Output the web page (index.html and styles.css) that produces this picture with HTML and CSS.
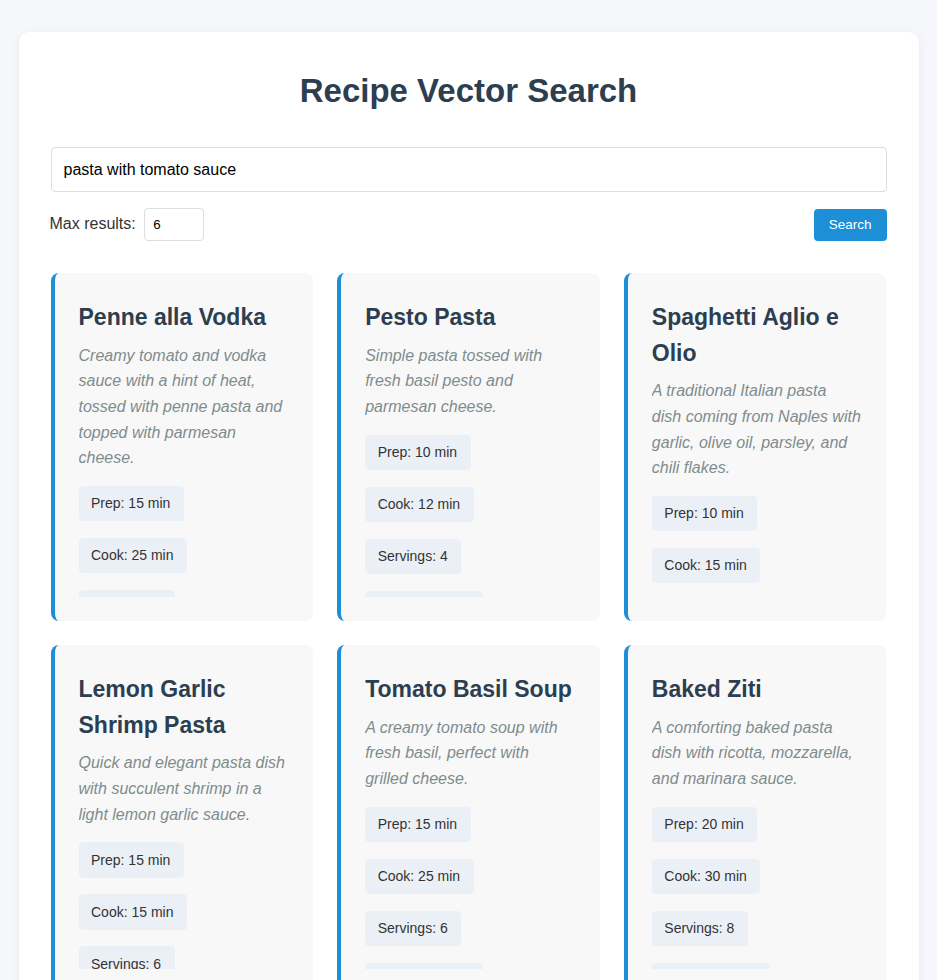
FILE: index.html
```html
<!DOCTYPE html>
<html lang="en">
<head>
<meta charset="utf-8">
<title>Recipe Vector Search</title>
<link rel="stylesheet" href="styles.css">
</head>
<body>
<div class="container">
  <h1 class="page-title">Recipe Vector Search</h1>
  <input class="search-input" type="text" value="pasta with tomato sauce">
  <div class="controls">
    <label class="max-label">Max results: <input class="max-input" type="number" value="6"></label>
    <button class="search-btn">Search</button>
  </div>
  <div class="results">
    <div class="card">
      <div class="card-body">
        <h3 class="card-title">Penne alla Vodka</h3>
        <p class="card-desc">Creamy tomato and vodka sauce with a hint of heat, tossed with penne pasta and topped with parmesan cheese.</p>
        <div class="tags">
          <span class="tag">Prep: 15 min</span>
          <span class="tag">Cook: 25 min</span>
          <span class="tag">Servings: 4</span>
          <span class="tag">Cuisine: Italian</span>
        </div>
      </div>
    </div>
    <div class="card">
      <div class="card-body">
        <h3 class="card-title">Pesto Pasta</h3>
        <p class="card-desc">Simple pasta tossed with fresh basil pesto and parmesan cheese.</p>
        <div class="tags">
          <span class="tag">Prep: 10 min</span>
          <span class="tag">Cook: 12 min</span>
          <span class="tag">Servings: 4</span>
          <span class="tag">Cuisine: Italian</span>
        </div>
      </div>
    </div>
    <div class="card">
      <div class="card-body">
        <h3 class="card-title">Spaghetti Aglio e Olio</h3>
        <p class="card-desc">A traditional Italian pasta<br>dish coming from Naples with garlic, olive oil, parsley, and chili flakes.</p>
        <div class="tags">
          <span class="tag">Prep: 10 min</span>
          <span class="tag">Cook: 15 min</span>
          <span class="tag">Servings: 4</span>
          <span class="tag">Cuisine: Italian</span>
        </div>
      </div>
    </div>
    <div class="card">
      <div class="card-body">
        <h3 class="card-title">Lemon Garlic Shrimp Pasta</h3>
        <p class="card-desc">Quick and elegant pasta dish with succulent shrimp in a light lemon garlic sauce.</p>
        <div class="tags">
          <span class="tag">Prep: 15 min</span>
          <span class="tag">Cook: 15 min</span>
          <span class="tag">Servings: 6</span>
          <span class="tag">Cuisine: Italian</span>
        </div>
      </div>
    </div>
    <div class="card">
      <div class="card-body">
        <h3 class="card-title">Tomato Basil Soup</h3>
        <p class="card-desc">A creamy tomato soup with fresh basil, perfect with<br>grilled cheese.</p>
        <div class="tags">
          <span class="tag">Prep: 15 min</span>
          <span class="tag">Cook: 25 min</span>
          <span class="tag">Servings: 6</span>
          <span class="tag">Cuisine: Italian</span>
        </div>
      </div>
    </div>
    <div class="card">
      <div class="card-body">
        <h3 class="card-title">Baked Ziti</h3>
        <p class="card-desc">A comforting baked pasta dish with ricotta, mozzarella, and marinara sauce.</p>
        <div class="tags">
          <span class="tag">Prep: 20 min</span>
          <span class="tag">Cook: 30 min</span>
          <span class="tag">Servings: 8</span>
          <span class="tag">Cuisine: Italian</span>
        </div>
      </div>
    </div>
  </div>
</div>
</body>
</html>
```

FILE: styles.css
```css
* {
  box-sizing: border-box;
}

body {
  margin: 0;
  padding: 32px 0;
  background: #f5f7fa;
  font-family: "Liberation Sans", Arial, sans-serif;
  font-size: 16px;
  line-height: 1.6;
  color: #333;
}

.container {
  max-width: 900px;
  margin: 0 auto;
  padding: 32px;
  background: #fff;
  border-radius: 10px;
  box-shadow: 0 2px 10px rgba(0, 0, 0, 0.06);
}

.page-title {
  margin: 0 0 32px;
  padding-top: 1px;
  font-size: 33px;
  line-height: 51.2px;
  font-weight: 700;
  text-align: center;
  color: #2c3e50;
}

.search-input {
  display: block;
  width: 100%;
  margin-top: -1px;
  padding: 12px;
  font-family: inherit;
  font-size: 16px;
  line-height: 19px;
  color: #000;
  border: 1px solid #ddd;
  border-radius: 4px;
  background: #fff;
}

.controls {
  display: flex;
  justify-content: space-between;
  align-items: center;
  margin-top: 16px;
}

.max-label {
  margin-left: -1px;
  font-size: 16px;
  color: #333;
}

.max-input {
  width: 60px;
  margin-left: 4px;
  padding: 8px;
  font-family: inherit;
  font-size: 13.33px;
  line-height: 15px;
  color: #000;
  border: 1px solid #ddd;
  border-radius: 4px;
  background: #fff;
  -moz-appearance: textfield;
}

.max-input::-webkit-inner-spin-button,
.max-input::-webkit-outer-spin-button {
  -webkit-appearance: none;
  margin: 0;
}

.search-btn {
  padding: 8px 15px;
  font-family: inherit;
  font-size: 13.5px;
  line-height: 16px;
  color: #fff;
  background: #1c8fd6;
  border: none;
  border-radius: 4px;
}

.results {
  display: grid;
  grid-template-columns: repeat(3, 1fr);
  gap: 24px;
  margin-top: 32px;
}

.card {
  padding: 24px;
  background: #f8f8f8;
  border-left: 4px solid #1c8fd6;
  border-radius: 8px;
}

.card-body {
  max-height: 300px;
  overflow: hidden;
}

.card-title {
  margin: 0 0 5px;
  padding-top: 3px;
  font-size: 23px;
  line-height: 35.6px;
  font-weight: 700;
  color: #2c3e50;
}

.card-desc {
  margin: 0 0 15px;
  padding-top: 2px;
  font-style: italic;
  color: #7f8c8d;
  line-height: 25.6px;
}

.tags {
  display: flex;
  flex-direction: column;
  align-items: flex-start;
  gap: 16.4px;
}

.tag {
  padding: 6.6px 13.5px 6.6px 12.5px;
  font-size: 14px;
  line-height: 22.4px;
  color: #333;
  background: #ebf0f7;
  border-radius: 4px;
}
```
